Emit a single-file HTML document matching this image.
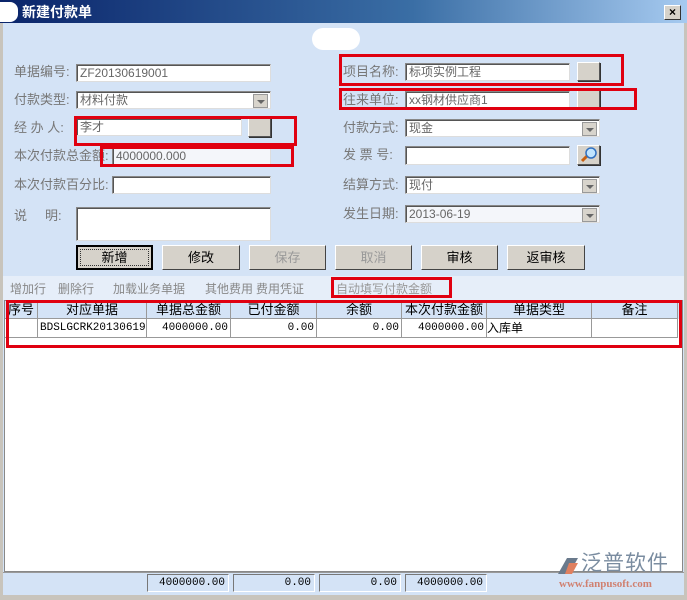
<!DOCTYPE html>
<html><head><meta charset="utf-8"><style>
*{margin:0;padding:0;box-sizing:border-box}
body{width:687px;height:600px;overflow:hidden;background:#d4e3f6;font-family:"Liberation Sans","Noto Sans CJK SC",sans-serif;font-size:13px;color:#777;position:relative;line-height:16px}
.a{position:absolute}
.t{position:absolute;white-space:nowrap;line-height:16px}
.in{position:absolute;background:#fff;border:1px solid #888;border-right-color:#ddd;border-bottom-color:#ddd;box-shadow:inset 1px 1px 0 #555;font-size:12px;color:#666;padding:1px 3px;white-space:nowrap;overflow:hidden;line-height:15px}
.dd{position:absolute;width:15px;height:14px;right:2px;top:2px;background:#d8d4cc;border:1px solid #999}
.dd:after{content:"";position:absolute;left:3px;top:5px;border:4px solid transparent;border-top:4px solid #666;border-bottom:0}
.bt{position:absolute;background:#d6d2ca;border:1px solid #fff;border-right-color:#555;border-bottom-color:#555;box-shadow:1px 1px 0 #333}
.btn{position:absolute;height:25px;background:#d6d2ca;border:1px solid #fff;border-right-color:#444;border-bottom-color:#444;font-size:13px;color:#000;text-align:center;line-height:23px}
.btn.dis{color:#999}
.red{position:absolute;border:3px solid #e00010}
.g{position:absolute;border-right:1px solid #999;border-bottom:1px solid #999;font-size:12px;white-space:nowrap;overflow:hidden;color:#000;height:17px;line-height:16px}
.h{text-align:center;font-size:13px}
.r{text-align:right;padding-right:2px;font-family:"Liberation Mono",monospace;font-size:11px}
.f{position:absolute;top:574px;height:18px;background:#d4e3f6;border:1px solid #777;border-right-color:#fff;border-bottom-color:#fff;text-align:right;padding-right:3px;font-family:"Liberation Mono",monospace;font-size:11px;color:#000;line-height:16px}
.tb{position:absolute;top:281px;color:#888;white-space:nowrap;line-height:16px;font-size:12px}
</style></head><body>
<div class="a" style="left:0;top:0;width:687px;height:23px;background:linear-gradient(90deg,#0a246a,#3a6ea5 60%,#a6caf0)"></div>
<div class="a" style="left:0;top:2px;width:18px;height:20px;background:#fff;border-radius:0 8px 8px 0"></div>
<div class="t" style="left:22px;top:4px;color:#fff;font-weight:bold;font-size:14px">新建付款单</div>
<div class="a" style="left:664px;top:5px;width:17px;height:15px;background:#d6d2ca;border:1px solid #fff;border-right-color:#333;border-bottom-color:#333;font-size:12px;font-weight:bold;color:#000;text-align:center;line-height:12px">×</div>
<div class="a" style="left:0;top:23px;width:3px;height:577px;background:#c8c4bc"></div>
<div class="a" style="left:684px;top:23px;width:3px;height:577px;background:#c8c4bc"></div>
<div class="a" style="left:312px;top:28px;width:48px;height:22px;background:#fff;border-radius:11px"></div>

<div class="t" style="left:14px;top:64px">单据编号:</div>
<div class="in" style="left:76px;top:64px;width:195px;height:18px">ZF20130619001</div>
<div class="t" style="left:14px;top:92px">付款类型:</div>
<div class="in" style="left:76px;top:91px;width:195px;height:18px">材料付款<div class="dd"></div></div>
<div class="t" style="left:14px;top:120px">经 办 人:</div>
<div class="in" style="left:76px;top:118px;width:166px;height:18px">李才</div>
<div class="bt" style="left:248px;top:118px;width:23px;height:19px"></div>
<div class="t" style="left:14px;top:148px">本次付款总金额:</div>
<div class="in" style="left:112px;top:147px;width:159px;height:18px;background:#f4f6fa">4000000.000</div>
<div class="t" style="left:14px;top:177px">本次付款百分比:</div>
<div class="in" style="left:112px;top:176px;width:159px;height:18px"></div>
<div class="t" style="left:14px;top:208px">说&nbsp;&nbsp;&nbsp;&nbsp;&nbsp;明:</div>
<div class="in" style="left:76px;top:207px;width:195px;height:34px"></div>

<div class="t" style="left:343px;top:64px">项目名称:</div>
<div class="in" style="left:405px;top:63px;width:165px;height:18px">标项实例工程</div>
<div class="bt" style="left:577px;top:62px;width:23px;height:19px"></div>
<div class="t" style="left:343px;top:92px">往来单位:</div>
<div class="in" style="left:405px;top:91px;width:165px;height:18px">xx钢材供应商1</div>
<div class="bt" style="left:577px;top:90px;width:23px;height:19px"></div>
<div class="t" style="left:343px;top:120px">付款方式:</div>
<div class="in" style="left:405px;top:119px;width:195px;height:18px">现金<div class="dd"></div></div>
<div class="t" style="left:343px;top:147px">发 票 号:</div>
<div class="in" style="left:405px;top:146px;width:165px;height:19px"></div>
<div class="bt" style="left:577px;top:145px;width:23px;height:20px"><svg width="21" height="18" viewBox="0 0 21 18"><line x1="4" y1="15" x2="10" y2="9" stroke="#c86010" stroke-width="3"/><circle cx="13" cy="7" r="5" fill="#bfe4ff" stroke="#3070c0" stroke-width="1.5"/></svg></div>
<div class="t" style="left:343px;top:177px">结算方式:</div>
<div class="in" style="left:405px;top:176px;width:195px;height:18px">现付<div class="dd"></div></div>
<div class="t" style="left:343px;top:206px">发生日期:</div>
<div class="in" style="left:405px;top:205px;width:195px;height:18px;background:#f4f6fa">2013-06-19<div class="dd"></div></div>

<div class="btn" style="left:76px;top:245px;width:77px;border:2px solid #000;"><div style="margin:2px;border:1px dotted #333;line-height:15px;height:17px">新增</div></div>
<div class="btn" style="left:162px;top:245px;width:78px">修改</div>
<div class="btn dis" style="left:249px;top:245px;width:77px">保存</div>
<div class="btn dis" style="left:335px;top:245px;width:77px">取消</div>
<div class="btn" style="left:421px;top:245px;width:77px">审核</div>
<div class="btn" style="left:507px;top:245px;width:78px">返审核</div>

<div class="a" style="left:3px;top:276px;width:681px;height:24px;background:#e6eef9"></div>
<div class="tb" style="left:10px">增加行</div>
<div class="tb" style="left:58px">删除行</div>
<div class="tb" style="left:113px">加载业务单据</div>
<div class="tb" style="left:205px">其他费用</div>
<div class="tb" style="left:256px">费用凭证</div>
<div class="tb" style="left:336px;color:#999">自动填写付款金额</div>

<div class="a" style="left:4px;top:300px;width:679px;height:272px;background:#fff;border:1px solid #888"></div>
<div class="a" style="left:5px;top:301px;width:677px;height:18px;background:#d4e3f6"></div>
<div class="g h" style="left:5px;top:302px;width:33px">序号</div>
<div class="g h" style="left:38px;top:302px;width:109px">对应单据</div>
<div class="g h" style="left:147px;top:302px;width:84px">单据总金额</div>
<div class="g h" style="left:231px;top:302px;width:86px">已付金额</div>
<div class="g h" style="left:317px;top:302px;width:85px">余额</div>
<div class="g h" style="left:402px;top:302px;width:85px">本次付款金额</div>
<div class="g h" style="left:487px;top:302px;width:105px">单据类型</div>
<div class="g h" style="left:592px;top:302px;width:86px">备注</div>
<div class="g" style="left:5px;top:319px;width:33px;height:19px"></div>
<div class="g" style="left:38px;top:319px;width:109px;height:19px;font-family:'Liberation Mono',monospace;font-size:11px;line-height:18px;padding-left:2px">BDSLGCRK201306190</div>
<div class="g r" style="left:147px;top:319px;width:84px;height:19px;line-height:18px">4000000.00</div>
<div class="g r" style="left:231px;top:319px;width:86px;height:19px;line-height:18px">0.00</div>
<div class="g r" style="left:317px;top:319px;width:85px;height:19px;line-height:18px">0.00</div>
<div class="g r" style="left:402px;top:319px;width:85px;height:19px;line-height:18px">4000000.00</div>
<div class="g" style="left:487px;top:319px;width:105px;height:19px;line-height:18px">入库单</div>
<div class="g" style="left:592px;top:319px;width:86px;height:19px"></div>

<div class="a" style="left:3px;top:572px;width:681px;height:23px;background:#d4e3f6;border-top:1px solid #999"></div>
<div class="f" style="left:147px;width:82px">4000000.00</div>
<div class="f" style="left:233px;width:82px">0.00</div>
<div class="f" style="left:319px;width:82px">0.00</div>
<div class="f" style="left:405px;width:82px">4000000.00</div>
<div class="a" style="left:0;top:595px;width:687px;height:5px;background:#c8c4bc"></div>

<svg class="a" style="left:556px;top:557px" width="24" height="18" viewBox="0 0 24 18"><path d="M11 1 L22 1 L13 17 L2 17 Z" fill="#6a7a8c"/><path d="M13 6 L22 6 L16 17 L9 17 Z" fill="#e08060"/></svg>
<div class="t" style="left:581px;top:553px;font-size:21px;line-height:22px;color:#7a8ca0;letter-spacing:1px">泛普软件</div>
<div class="t" style="left:559px;top:578px;font-size:11px;line-height:12px;color:#d08070;font-family:'Liberation Serif',serif;font-weight:bold">www.fanpusoft.com</div>

<div class="red" style="left:339px;top:54px;width:285px;height:32px"></div>
<div class="red" style="left:339px;top:88px;width:298px;height:22px"></div>
<div class="red" style="left:74px;top:116px;width:223px;height:30px"></div>
<div class="red" style="left:100px;top:146px;width:194px;height:21px"></div>
<div class="red" style="left:331px;top:277px;width:121px;height:21px"></div>
<div class="red" style="left:6px;top:300px;width:676px;height:48px"></div>
</body></html>
